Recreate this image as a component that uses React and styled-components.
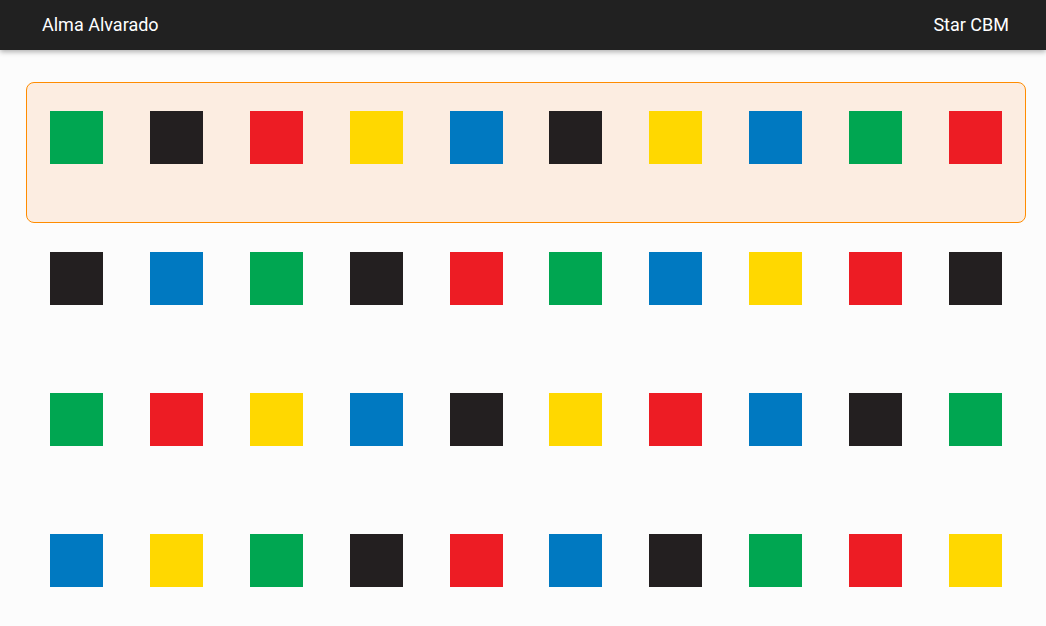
import React from "react";
import styled, { createGlobalStyle } from "styled-components";

const colors = {
  g: "#00a651",
  k: "#231f20",
  r: "#ed1c24",
  y: "#ffd800",
  b: "#0079c1"
};

const rows = [
  ["g", "k", "r", "y", "b", "k", "y", "b", "g", "r"],
  ["k", "b", "g", "k", "r", "g", "b", "y", "r", "k"],
  ["g", "r", "y", "b", "k", "y", "r", "b", "k", "g"],
  ["b", "y", "g", "k", "r", "b", "k", "g", "r", "y"]
];

const GlobalStyle = createGlobalStyle`
  body {
    margin: 0;
    background: #fcfcfc;
    font-family: Roboto, "Liberation Sans", sans-serif;
  }
`;

const Header = styled.header`
  box-sizing: border-box;
  height: 50px;
  background: #212121;
  color: #fff;
  display: flex;
  align-items: center;
  justify-content: space-between;
  padding: 0 37px 2px 42px;
  font-size: 18px;
  box-shadow: 0 2px 5px rgba(0, 0, 0, 0.3);
  position: relative;
`;

const Board = styled.main`
  padding: 32px 0 0 26px;
  display: flex;
  flex-direction: column;
`;

const Row = styled.div`
  box-sizing: border-box;
  width: 1000px;
  height: 141px;
  display: grid;
  grid-template-columns: repeat(10, 1fr);
  align-items: start;
  border: 1px solid ${p => (p.active ? "#ff8c00" : "transparent")};
  border-radius: 8px;
  background: ${p => (p.active ? "#fcede1" : "transparent")};
`;

const Cell = styled.div`
  display: flex;
  justify-content: center;
  padding-top: 28px;
`;

const Square = styled.div`
  width: 53px;
  height: 53px;
  background: ${p => colors[p.c]};
`;

export default function App() {
  return (
    <>
      <GlobalStyle />
      <Header>
        <span>Alma Alvarado</span>
        <span>Star CBM</span>
      </Header>
      <Board>
        {rows.map((row, i) => (
          <Row key={i} active={i === 0}>
            {row.map((c, j) => (
              <Cell key={j}>
                <Square c={c} />
              </Cell>
            ))}
          </Row>
        ))}
      </Board>
    </>
  );
}
